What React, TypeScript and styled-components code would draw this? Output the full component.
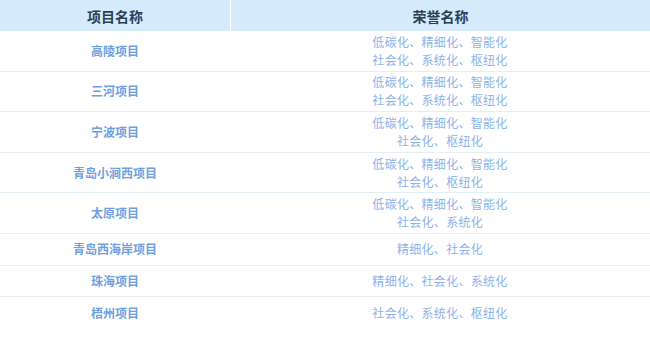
import React from "react";
import styled, { createGlobalStyle } from "styled-components";

const Global = createGlobalStyle`
  html, body { margin: 0; padding: 0; background: #ffffff; }
  body { font-family: "Noto Sans CJK SC", "Noto Sans", sans-serif; }
`;

const Table = styled.div`
  width: 650px;
  display: grid;
  grid-template-columns: 230px 1fr;
`;

const HeadCell = styled.div<{ $first?: boolean }>`
  height: 31px;
  background: #d5eafb;
  display: flex;
  align-items: center;
  justify-content: center;
  font-size: 14px;
  font-weight: 700;
  color: #2b3f58;
  border-left: ${(p) => (p.$first ? "none" : "1px solid #ffffff")};
`;

const Cell = styled.div<{ $lines: number; $last?: boolean }>`
  min-height: ${(p) => (p.$lines > 1 ? "40.6px" : "31.7px")};
  box-sizing: border-box;
  border-bottom: 1px solid ${(p) => (p.$last ? "transparent" : "#e4eef7")};
  display: flex;
  flex-direction: column;
  align-items: center;
  justify-content: center;
  padding: 1px 0;
  font-size: 12px;
  line-height: 18px;
`;

const NameCell = styled(Cell)`
  font-weight: 700;
  color: #6f9fe0;
`;

const HonorCell = styled(Cell)`
  color: #8eb2ea;
  letter-spacing: 0.3px;
`;

const rows: { name: string; honors: string[] }[] = [
  { name: "高陵项目", honors: ["低碳化、精细化、智能化", "社会化、系统化、枢纽化"] },
  { name: "三河项目", honors: ["低碳化、精细化、智能化", "社会化、系统化、枢纽化"] },
  { name: "宁波项目", honors: ["低碳化、精细化、智能化", "社会化、枢纽化"] },
  { name: "青岛小涧西项目", honors: ["低碳化、精细化、智能化", "社会化、枢纽化"] },
  { name: "太原项目", honors: ["低碳化、精细化、智能化", "社会化、系统化"] },
  { name: "青岛西海岸项目", honors: ["精细化、社会化"] },
  { name: "珠海项目", honors: ["精细化、社会化、系统化"] },
  { name: "梧州项目", honors: ["社会化、系统化、枢纽化"] },
];

export default function App() {
  return (
    <>
      <Global />
      <Table>
        <HeadCell $first>项目名称</HeadCell>
        <HeadCell>荣誉名称</HeadCell>
        {rows.map((r, i) => {
          const last = i === rows.length - 1;
          return (
            <React.Fragment key={r.name}>
              <NameCell $lines={r.honors.length} $last={last}>
                {r.name}
              </NameCell>
              <HonorCell $lines={r.honors.length} $last={last}>
                {r.honors.map((h) => (
                  <span key={h}>{h}</span>
                ))}
              </HonorCell>
            </React.Fragment>
          );
        })}
      </Table>
    </>
  );
}
